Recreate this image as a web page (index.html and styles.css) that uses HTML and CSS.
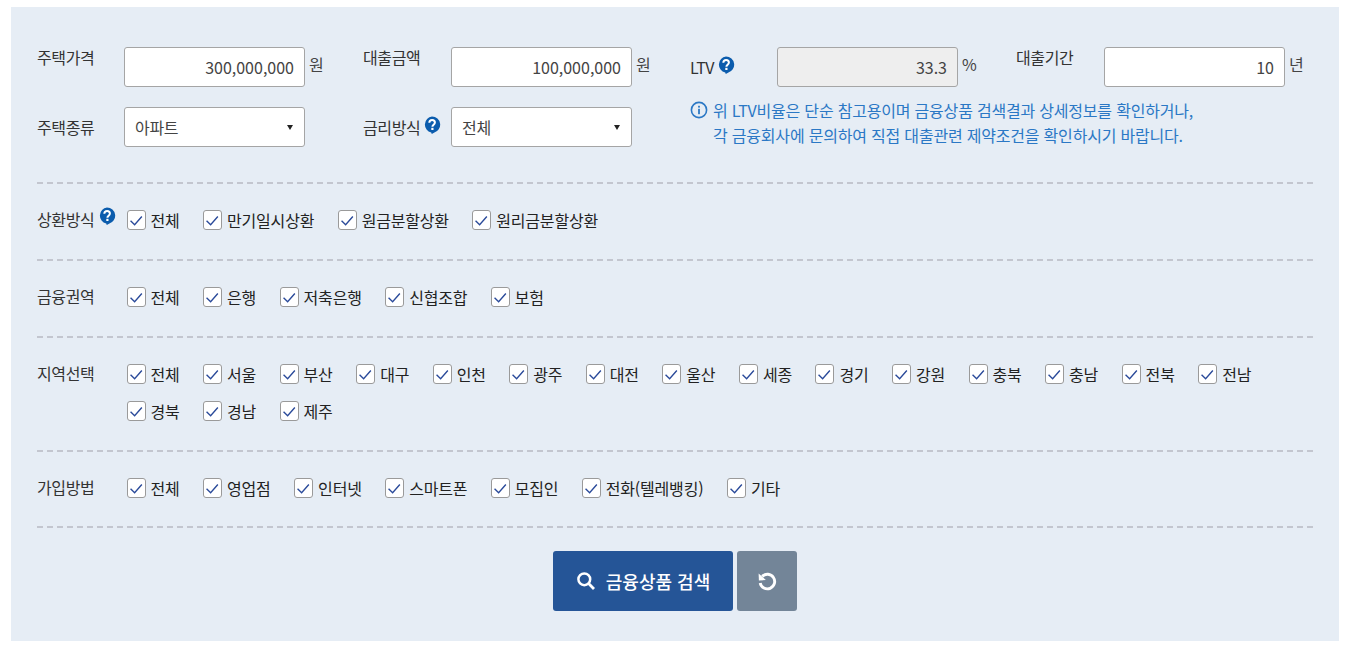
FILE: index.html
```html
<!DOCTYPE html>
<html lang="ko">
<head>
<meta charset="utf-8">
<title>금융상품 검색</title>
<link rel="stylesheet" href="styles.css">
</head>
<body>
<svg class="defs" width="0" height="0" aria-hidden="true">
  <symbol id="help" viewBox="0 0 18 18">
    <path d="M9 .5a8.2 8.2 0 0 1 2 16.15L8.8 18l-.6-1.4A8.2 8.2 0 0 1 9 .5z" fill="#0b5cad"/>
    <path d="M6.3 6.8C6.4 5 7.5 4 9.1 4c1.7 0 2.8 1 2.8 2.5 0 2.2-2.5 2.2-2.5 4.2" fill="none" stroke="#fff" stroke-width="2"/>
    <rect x="8.3" y="11.8" width="2.2" height="2.2" fill="#fff"/>
  </symbol>
  <symbol id="check" viewBox="0 0 20 20">
    <path d="M3 10.8l4.8 4.8L16.3 5.9" fill="none" stroke="#2a4a9a" stroke-width="1.6"/>
  </symbol>
</svg>
<main class="panel">
  <section class="fields">
    <div class="label lift">주택가격</div>
    <input class="box" value="300,000,000">
    <div class="unit">원</div>
    <div class="label lift">대출금액</div>
    <input class="box" value="100,000,000">
    <div class="unit">원</div>
    <div class="label">LTV<svg class="help"><use href="#help"/></svg></div>
    <input class="box ro" value="33.3" readonly>
    <div class="unit">%</div>
    <div class="label lift">대출기간</div>
    <input class="box" value="10">
    <div class="unit">년</div>

    <div class="label">주택종류</div>
    <div class="select"><select><option>아파트</option></select></div>
    <div></div>
    <div class="label">금리방식<svg class="help"><use href="#help"/></svg></div>
    <div class="select"><select><option>전체</option></select></div>
    <div></div>
    <div class="note">
      <svg class="info" viewBox="0 0 18 18"><circle cx="9" cy="9" r="7.6" fill="none" stroke="#2b78c5" stroke-width="1.6"/><rect x="8.1" y="7.8" width="1.8" height="5.4" fill="#2b78c5"/><rect x="8.1" y="4.8" width="1.8" height="1.8" fill="#2b78c5"/></svg>
      <p>위 LTV비율은 단순 참고용이며 금융상품 검색결과 상세정보를 확인하거나,<br>각 금융회사에 문의하여 직접 대출관련 제약조건을 확인하시기 바랍니다.</p>
    </div>
  </section>

  <section class="row">
    <div class="row-label">상환방식<svg class="help"><use href="#help"/></svg></div>
    <div class="checks">
      <label class="chk"><span class="cb"><svg><use href="#check"/></svg></span>전체</label>
      <label class="chk"><span class="cb"><svg><use href="#check"/></svg></span>만기일시상환</label>
      <label class="chk"><span class="cb"><svg><use href="#check"/></svg></span>원금분할상환</label>
      <label class="chk"><span class="cb"><svg><use href="#check"/></svg></span>원리금분할상환</label>
    </div>
  </section>

  <section class="row">
    <div class="row-label">금융권역</div>
    <div class="checks">
      <label class="chk"><span class="cb"><svg><use href="#check"/></svg></span>전체</label>
      <label class="chk"><span class="cb"><svg><use href="#check"/></svg></span>은행</label>
      <label class="chk"><span class="cb"><svg><use href="#check"/></svg></span>저축은행</label>
      <label class="chk"><span class="cb"><svg><use href="#check"/></svg></span>신협조합</label>
      <label class="chk"><span class="cb"><svg><use href="#check"/></svg></span>보험</label>
    </div>
  </section>

  <section class="row">
    <div class="row-label">지역선택</div>
    <div class="checks">
      <label class="chk"><span class="cb"><svg><use href="#check"/></svg></span>전체</label>
      <label class="chk"><span class="cb"><svg><use href="#check"/></svg></span>서울</label>
      <label class="chk"><span class="cb"><svg><use href="#check"/></svg></span>부산</label>
      <label class="chk"><span class="cb"><svg><use href="#check"/></svg></span>대구</label>
      <label class="chk"><span class="cb"><svg><use href="#check"/></svg></span>인천</label>
      <label class="chk"><span class="cb"><svg><use href="#check"/></svg></span>광주</label>
      <label class="chk"><span class="cb"><svg><use href="#check"/></svg></span>대전</label>
      <label class="chk"><span class="cb"><svg><use href="#check"/></svg></span>울산</label>
      <label class="chk"><span class="cb"><svg><use href="#check"/></svg></span>세종</label>
      <label class="chk"><span class="cb"><svg><use href="#check"/></svg></span>경기</label>
      <label class="chk"><span class="cb"><svg><use href="#check"/></svg></span>강원</label>
      <label class="chk"><span class="cb"><svg><use href="#check"/></svg></span>충북</label>
      <label class="chk"><span class="cb"><svg><use href="#check"/></svg></span>충남</label>
      <label class="chk"><span class="cb"><svg><use href="#check"/></svg></span>전북</label>
      <label class="chk"><span class="cb"><svg><use href="#check"/></svg></span>전남</label>
      <label class="chk"><span class="cb"><svg><use href="#check"/></svg></span>경북</label>
      <label class="chk"><span class="cb"><svg><use href="#check"/></svg></span>경남</label>
      <label class="chk"><span class="cb"><svg><use href="#check"/></svg></span>제주</label>
    </div>
  </section>

  <section class="row last">
    <div class="row-label">가입방법</div>
    <div class="checks">
      <label class="chk"><span class="cb"><svg><use href="#check"/></svg></span>전체</label>
      <label class="chk"><span class="cb"><svg><use href="#check"/></svg></span>영업점</label>
      <label class="chk"><span class="cb"><svg><use href="#check"/></svg></span>인터넷</label>
      <label class="chk"><span class="cb"><svg><use href="#check"/></svg></span>스마트폰</label>
      <label class="chk"><span class="cb"><svg><use href="#check"/></svg></span>모집인</label>
      <label class="chk"><span class="cb"><svg><use href="#check"/></svg></span>전화(텔레뱅킹)</label>
      <label class="chk"><span class="cb"><svg><use href="#check"/></svg></span>기타</label>
    </div>
  </section>

  <div class="actions">
    <button class="btn search" type="button">
      <svg viewBox="0 0 20 20" width="20" height="20"><circle cx="8.3" cy="8.3" r="5.9" fill="none" stroke="#fff" stroke-width="2.5"/><path d="M12.6 12.6l5.4 5.4" stroke="#fff" stroke-width="2.8"/></svg>
      금융상품 검색
    </button>
    <button class="btn reset" type="button" aria-label="초기화">
      <svg viewBox="0 0 20 20" width="20" height="20"><path d="M5.2 5.4A7.3 7.3 0 1 1 3.2 12" fill="none" stroke="#fff" stroke-width="2.9"/><path d="M1.6 2.4l.3 7.2 7-.6z" fill="#fff"/></svg>
    </button>
  </div>
</main>
</body>
</html>
```
FILE: styles.css
```css
* { box-sizing: border-box; }
html, body { margin: 0; padding: 0; }
body {
  background: #fff;
  font-family: "Noto Sans CJK KR", "Noto Sans", sans-serif;
  font-size: 16px;
  color: #333;
  padding: 7px 12px 9px 11px;
}
.defs { display: block; height: 0; }
.panel {
  background: #e6edf5;
  padding: 40px 26px 30px;
  height: 634px;
}
.fields {
  display: grid;
  grid-template-columns: 87px 181px 58px 88px 181px 58px 87px 181px 58px 88px 181px 1fr;
  grid-template-rows: 40px 40px;
  row-gap: 20px;
  align-items: center;
  height: 137px;
  border-bottom: 2px dashed #c3c6cf;
}
.label { display: flex; align-items: flex-start; letter-spacing: -0.4px; line-height: 22px; }
.lift { align-self: start; margin-top: -1px; }
.unit { padding-left: 4px; align-self: start; margin-top: 6px; line-height: 22px; color: #444; letter-spacing: -0.3px; }
.box {
  width: 181px;
  height: 40px;
  border: 1px solid #a5a5a5;
  border-radius: 3px;
  background: #fff;
  padding: 0 10px;
  text-align: right;
  font: inherit;
  color: #444;
  outline: 0;
}
.ro { background: #eee; }
.help { width: 18px; height: 18px; margin: 0 0 0 3px; flex: none; }
.select { position: relative; width: 181px; height: 40px; }
.select select {
  appearance: none;
  width: 100%;
  height: 100%;
  border: 1px solid #a5a5a5;
  border-radius: 3px;
  background: #fff;
  padding: 0 10px;
  font: inherit;
  letter-spacing: -0.3px;
  color: #444;
}
.select::after {
  content: "";
  position: absolute;
  right: 12px;
  top: 18px;
  border-left: 3px solid transparent;
  border-right: 3px solid transparent;
  border-top: 5px solid #222;
}
.note {
  grid-column: 7 / -1;
  display: flex;
  gap: 5px;
  color: #2b78c5;
  letter-spacing: -0.2px;
  line-height: 25px;
  align-self: start;
  margin-top: -9px;
}
.note p { margin: 0; white-space: nowrap; }
.info { width: 18px; height: 18px; flex: none; margin-top: 3px; }
.row {
  display: flex;
  border-bottom: 2px dashed #c3c6cf;
  padding: 24px 0 27px;
}
.row.last { padding-bottom: 26px; }
.row-label {
  width: 89.5px;
  flex: none;
  display: flex;
  align-items: flex-start;
  letter-spacing: -0.4px;
  line-height: 22px;
}
.row-label .help { margin-top: -1px; margin-left: 4px; }
.checks { display: flex; flex-wrap: wrap; row-gap: 13px; }
.chk { display: flex; align-items: center; gap: 5px; height: 24px; color: #222; letter-spacing: -0.2px; white-space: nowrap; margin-right: 23.5px; }
.cb {
  width: 19px;
  height: 20px;
  background: #fff;
  border: 1px solid #9a9a9a;
  border-radius: 3px;
  display: flex;
  flex: none;
}
.cb svg { width: 18px; height: 18px; }
.actions { display: flex; justify-content: center; gap: 4px; margin-top: 23px; }
.btn {
  height: 60px;
  border: 0;
  border-radius: 3px;
  color: #fff;
  font: inherit;
  font-size: 18px;
  font-weight: 500;
  display: flex;
  align-items: center;
  justify-content: center;
}
.search { width: 180px; background: #255597; gap: 10px; }
.reset { width: 60px; background: #738598; }
```
